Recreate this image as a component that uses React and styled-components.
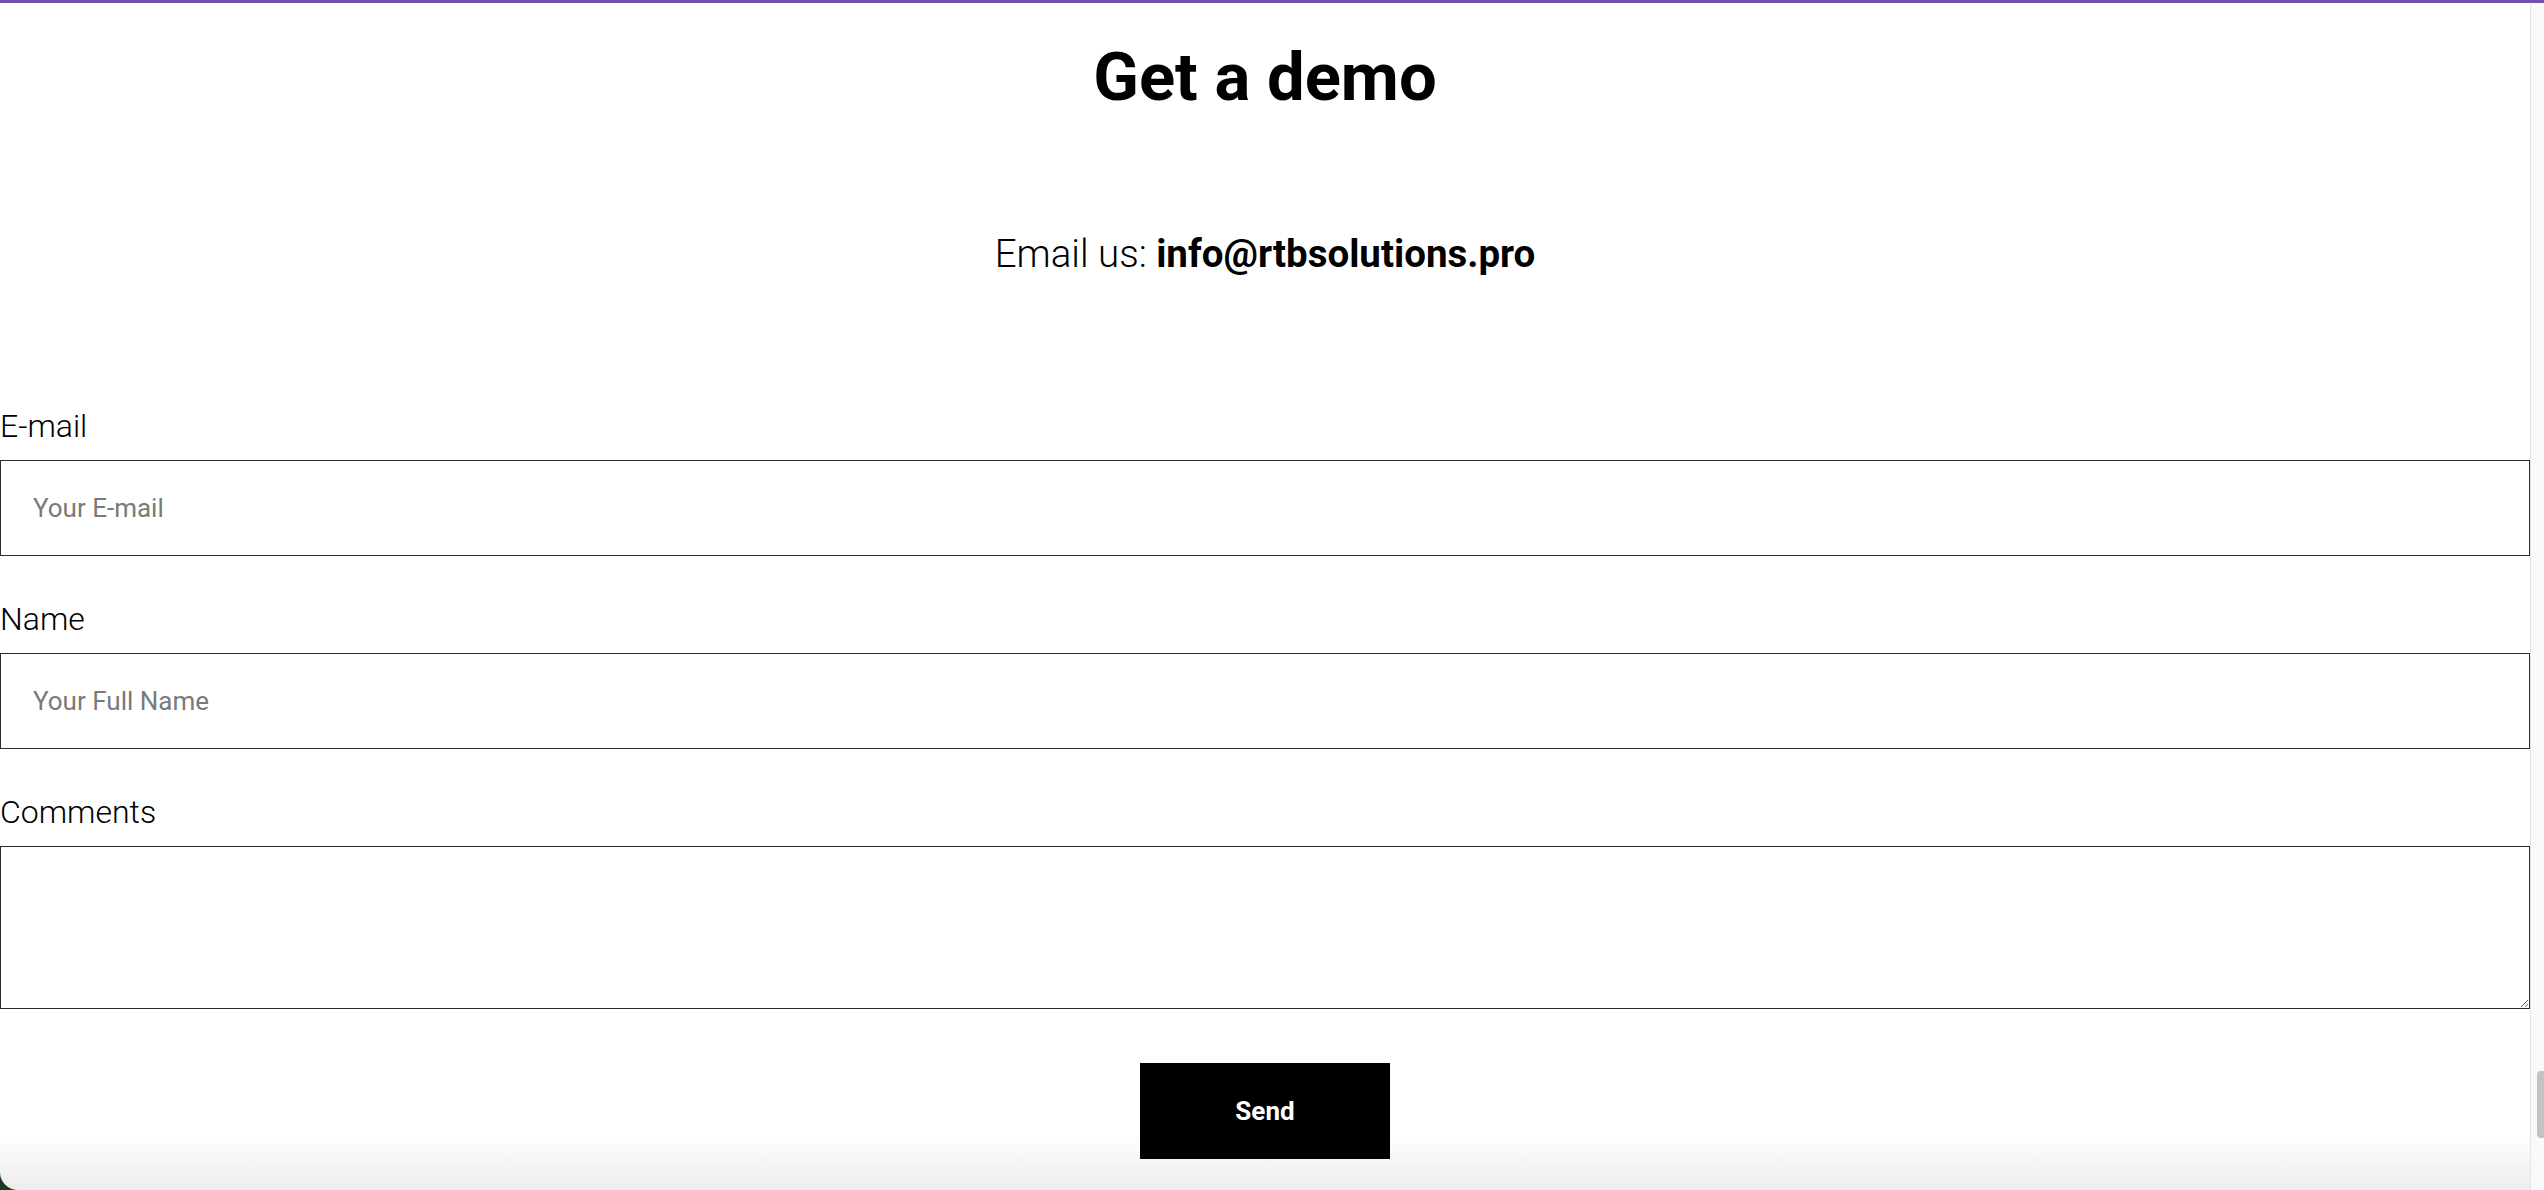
import React from "react";
import styled, { createGlobalStyle } from "styled-components";

const GlobalStyle = createGlobalStyle`
    html, body {
        margin: 0;
        padding: 0;
        background: #1d3a21;
        overflow: hidden;
    }
    * {
        box-sizing: border-box;
    }
`
const Page = styled.div`
    width: 100vw;
    height: 100vh;
    display: flex;
    flex-direction: column;
    font-family: Roboto, "Liberation Sans", sans-serif;
`
const TopLine = styled.div`
    height: 3px;
    flex-shrink: 0;
    background: #7350ab;
`
const Body = styled.div`
    flex: 1;
    display: flex;
    min-height: 0;
`
const MainContent = styled.main`
    flex: 1;
    display: flex;
    flex-direction: column;
    border-bottom-left-radius: 18px;
    background: linear-gradient(to bottom, #ffffff calc(100% - 56px), #ececec 100%);
`
const ScrollGutter = styled.div`
    width: 14px;
    flex-shrink: 0;
    display: flex;
    flex-direction: column;
    align-items: flex-end;
    background: #f9f9f9;
    border-left: 1px solid #e6e6e6;
`
const ScrollThumb = styled.div`
    width: 7px;
    height: 67px;
    margin-top: auto;
    margin-bottom: 52px;
    border-radius: 4px 0 0 4px;
    background: #c3c3c3;
`
const Title = styled.h1`
    margin: 41px 0 0;
    font-size: 67px;
    line-height: 1;
    font-weight: 700;
    text-align: center;
    color: #000;
`
const EmailLine = styled.p`
    margin: 124px 0 0;
    font-size: 38.5px;
    line-height: 1;
    font-weight: 300;
    text-align: center;
    color: #000;

    b {
        font-weight: 700;
    }
`
const Form = styled.form`
    display: flex;
    flex-direction: column;
    margin-top: 136px;
`
const Field = styled.div`
    display: flex;
    flex-direction: column;
    margin-bottom: ${props => props.$last ? "54px" : "47px"};
`
const Label = styled.label`
    font-size: 32px;
    line-height: 1;
    font-weight: 300;
    color: #000;
    margin-bottom: 18px;
`
const Input = styled.input`
    width: 100%;
    height: 96px;
    margin: 0;
    padding: 0 32px;
    border: 1px solid #2b2b2b;
    border-radius: 0;
    background: #fff;
    font-family: Roboto, "Liberation Sans", sans-serif;
    font-size: 26px;
    color: #000;
    outline: none;

    &::placeholder {
        color: #7a7a7a;
    }
`
const TextArea = styled.textarea`
    display: block;
    width: 100%;
    height: 163px;
    margin: 0;
    padding: 20px 32px;
    border: 1px solid #2b2b2b;
    border-radius: 0;
    background: #fff;
    font-family: Roboto, "Liberation Sans", sans-serif;
    font-size: 26px;
    outline: none;
`
const SendButton = styled.button`
    align-self: center;
    width: 250px;
    height: 96px;
    border: none;
    border-radius: 0;
    background: #000;
    color: #fff;
    font-family: Roboto, "Liberation Sans", sans-serif;
    font-size: 26px;
    font-weight: 700;
    cursor: pointer;
`

export default function App() {
    return(
        <Page>
            <GlobalStyle/>
            <TopLine/>
            <Body>
                <MainContent>
                    <Title>Get a demo</Title>
                    <EmailLine>Email us: <b>info@rtbsolutions.pro</b></EmailLine>
                    <Form onSubmit={e => e.preventDefault()}>
                        <Field>
                            <Label htmlFor="email">E-mail</Label>
                            <Input id="email" type="email" placeholder="Your E-mail"/>
                        </Field>
                        <Field>
                            <Label htmlFor="name">Name</Label>
                            <Input id="name" type="text" placeholder="Your Full Name"/>
                        </Field>
                        <Field $last>
                            <Label htmlFor="comments">Comments</Label>
                            <TextArea id="comments"/>
                        </Field>
                        <SendButton type="submit">Send</SendButton>
                    </Form>
                </MainContent>
                <ScrollGutter>
                    <ScrollThumb/>
                </ScrollGutter>
            </Body>
        </Page>
    );
}
